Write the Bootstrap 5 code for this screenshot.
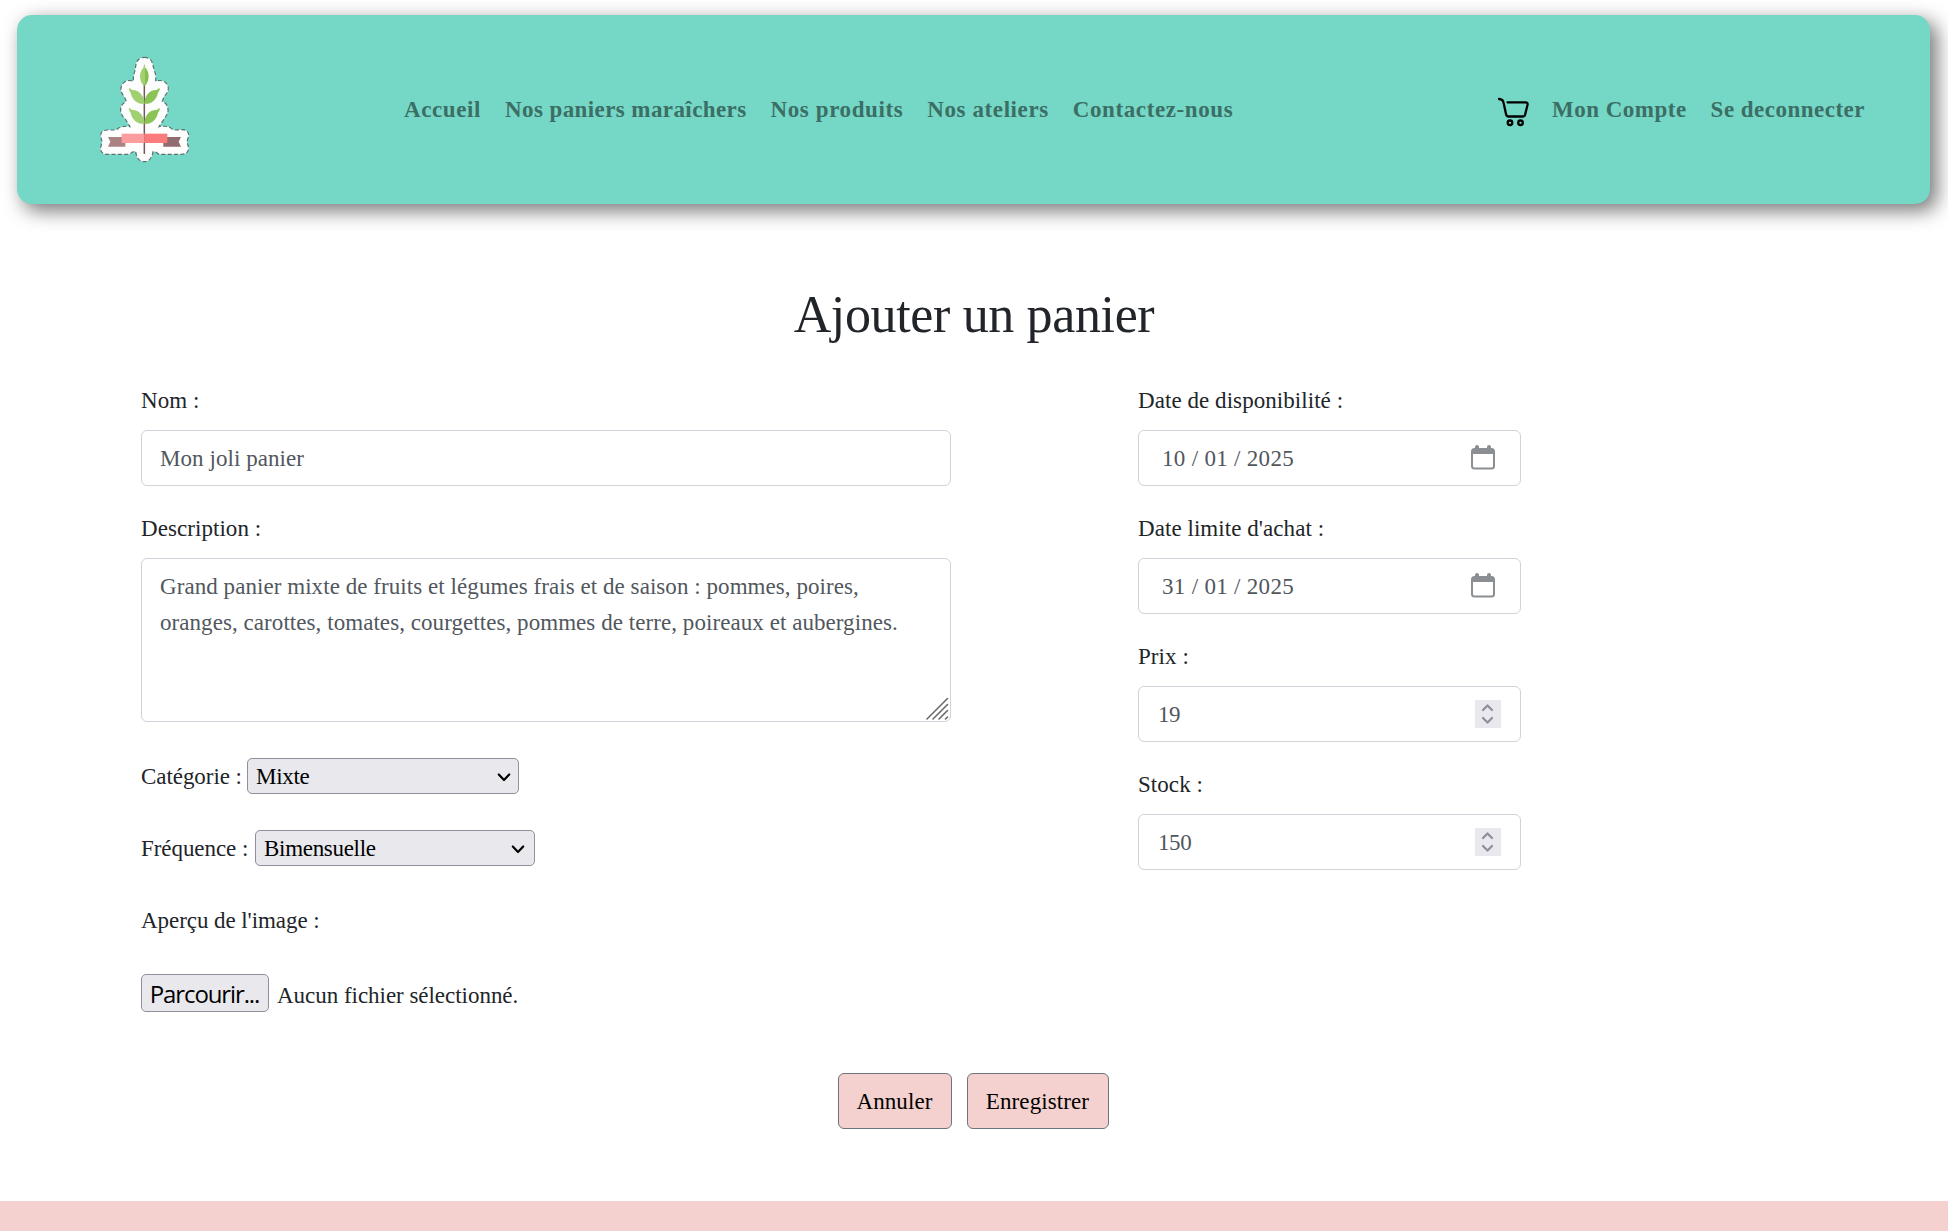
<!DOCTYPE html>
<html lang="fr">
<head>
<meta charset="utf-8">
<meta name="viewport" content="width=device-width, initial-scale=1">
<title>Ajouter un panier</title>
<link href="https://cdn.jsdelivr.net/npm/bootstrap@5.3.0/dist/css/bootstrap.min.css" rel="stylesheet">
<style>
body{font-family:"Liberation Serif",serif;font-size:23px;line-height:36px;letter-spacing:.06px;color:#212529;background:#fff;overflow:hidden}
.site-nav{margin:15px 18px 0 17px;height:189px;padding:0 53px 0 73px;border-radius:15px;background:#75d7c5;box-shadow:6.25px 6.25px 18.75px rgba(0,0,0,.53)}
.site-nav .nav-link{padding:0 12px;font-weight:700;letter-spacing:.49px;color:#3b6f65;white-space:nowrap}
.site-nav .nav-main .nav-link{letter-spacing:.6px}
.site-nav .nav-main .nav-long{letter-spacing:.41px}
.nav-main{margin-left:192px}
.page-title{margin:80px 0 0;font-size:52px;line-height:62px;letter-spacing:-.36px;font-weight:400}
.panier-form{padding:37px 0 0 141px}
.col-left{width:810px}
.col-right{width:383px;margin-left:187px}
.form-label{display:block;margin:0 0 11px}
.form-control{font:inherit;letter-spacing:inherit;color:#51575d;border:1px solid #ced4da;border-radius:6px;padding:10px 18px 8px;height:56px;background:#fff}
.field{height:128px}
.field-area{height:247px}
textarea.form-control{height:164px;resize:none;overflow:hidden;white-space:pre;letter-spacing:.06px}
.date-input{padding-left:23px;letter-spacing:.3px}
.num-input{letter-spacing:-.4px;padding-left:19px}
.over-icon{position:absolute;pointer-events:none}
.cal-icon{right:26px;top:15px}
.spin-icon{right:20px;top:14px}
.grip-icon{right:2px;bottom:2px}
.pick-row{height:36px;margin-bottom:36px}
.pick-text{padding-top:1px;letter-spacing:-.06px}
.pick{appearance:none;display:block;height:36px;font:inherit;letter-spacing:-.3px;line-height:32px;color:#000;background:#e9e9ed;border:1px solid #8f8f9d;border-radius:5px;padding:2px 8px 0}
.pick-cat{width:272px}
.pick-freq{width:280px}
.chev{right:8px;top:13px}
.pick-freq + .chev{right:10px}
.file-btn{width:128px;height:38px;font-family:"Open Sans",sans-serif;font-size:24px;line-height:34px;letter-spacing:-1.12px;color:#000;background:#e9e9ed;border:1px solid #8f8f9d;border-radius:5px;padding:1px 1px 0 0;white-space:nowrap}
.file-name{padding-top:4px;letter-spacing:-.03px}
.form-actions{gap:15px;margin-top:59px;padding-right:2px}
.btn-pink{font-size:23px;line-height:36px;letter-spacing:.1px;color:#000;background:#f4d0ce;border:1px solid #6c757d;border-radius:6px;height:56px;padding:10px 0 8px}
.site-footer{margin-top:72px;height:60px;background:#f4d0ce}
</style>
</head>
<body>
<nav class="site-nav d-flex align-items-center">
  <svg width="110" height="120" viewBox="0 0 330 360" aria-label="Logo">
    <path d="M163 22C177 22 186 30 188 43L193 62C199 76 197 86 197 94C213 88 228 93 234 109C238 122 230 131 222 140L217 154C229 159 235 170 234 184C231 197 224 203 219 212L207 230C220 228 232 228 241 233Q248 240 256 240L278 239C291 240 297 247 296 258L291 275L296 294C295 307 287 313 274 313H207Q193 302 189 305L187 315C182 328 175 335 163 335S143 328 139 315L137 305Q132 301 119 313H54C38 313 31 306 32 293L36 275L32 258C32 246 39 240 52 240H72Q80 240 86 234C96 228 108 228 120 230L106 207C98 199 93 193 92 181C91 169 98 159 109 154L103 140C95 131 90 122 94 109C100 93 115 88 130 94C129 81 132 72 135 61L138 43C141 30 150 22 163 22Z" fill="#fdfdfd" stroke="#5b706c" stroke-width="3.600" stroke-dasharray="12 7"/>
    <path d="M163 102V312" stroke="#74595a" stroke-width="4.500"/>
    <path d="M163 43Q160 45 161 52Q149 66 150 80Q151 98 163 109Z" fill="#a3d172"/>
    <path d="M163 43Q166 45 165 52Q177 66 176 80Q175 98 163 109Z" fill="#86be50"/>
    <g id="leaf-pair">
      <path d="M163 161C143 164 126 149 122 128Q115 119 117 115Q121 114 126 120C147 119 163 138 163 161Z" fill="#a1d071"/>
      <path d="M163 161C183 164 200 149 204 128Q211 119 209 115Q205 114 200 120C179 119 163 138 163 161Z" fill="#8bc355"/>
    </g>
    <use href="#leaf-pair" y="60"/>
    <path d="M54 261H106V290H54L61 275Z" fill="#ab8284"/>
    <path d="M273 261H220V290H273L266 275Z" fill="#916b6d"/>
    <path d="M95 251H163V279H95Z" fill="#fe9d9d"/>
    <path d="M163 251H232V279H163Z" fill="#fb7b7c"/>
  </svg>
  <div class="nav-main d-flex">
    <a class="nav-link" href="#">Accueil</a>
    <a class="nav-link nav-long" href="#">Nos paniers maraîchers</a>
    <a class="nav-link" href="#">Nos produits</a>
    <a class="nav-link" href="#">Nos ateliers</a>
    <a class="nav-link" href="#">Contactez-nous</a>
  </div>
  <div class="d-flex align-items-center ms-auto">
    <svg class="me-2 mt-1" width="36" height="32" viewBox="0 0 36 32" fill="none" stroke="#000" stroke-width="2.300" stroke-linecap="round" stroke-linejoin="round" aria-label="Panier">
      <path d="M3 3Q7 3.300 7.500 6.500L10 18Q10.500 20.500 12.500 20.500H27Q28.500 20.500 29 19L31.500 9Q32 6.300 29.500 6.300H11.500"/>
      <circle cx="14" cy="26.800" r="2.300"/><circle cx="24.500" cy="26.800" r="2.300"/>
    </svg>
    <a class="nav-link" href="#">Mon Compte</a>
    <a class="nav-link" href="#">Se deconnecter</a>
  </div>
</nav>

<main>
  <h1 class="page-title text-center">Ajouter un panier</h1>
  <form>
    <div class="panier-form d-flex">
      <div class="col-left">
        <div class="field">
          <label class="form-label" for="nom">Nom :</label>
          <input class="form-control" id="nom" type="text" value="Mon joli panier">
        </div>
        <div class="field-area">
          <label class="form-label" for="desc">Description :</label>
          <div class="position-relative">
            <textarea class="form-control" id="desc">Grand panier mixte de fruits et légumes frais et de saison : pommes, poires,
oranges, carottes, tomates, courgettes, pommes de terre, poireaux et aubergines.</textarea>
            <svg class="over-icon grip-icon" width="23" height="23" viewBox="0 0 23 23" stroke="#6b6b6b" stroke-width="1.600" stroke-linecap="round"><path d="M1 22L21.500 1.500M7 22L21.500 7.500M13 22L21.500 13.500M19.500 22L21.500 20"/></svg>
          </div>
        </div>
        <div class="pick-row d-flex">
          <label class="pick-text" for="cat" style="width:106px">Catégorie :</label>
          <div class="position-relative">
            <select class="pick pick-cat" id="cat"><option>Mixte</option></select>
            <svg class="over-icon chev" width="14" height="12" viewBox="0 0 14 12" fill="none" stroke="#000" stroke-width="2.200" stroke-linecap="round" stroke-linejoin="round"><path d="M1.800 3.500L7 9L12.200 3.500"/></svg>
          </div>
        </div>
        <div class="pick-row d-flex">
          <label class="pick-text" for="freq" style="width:114px">Fréquence :</label>
          <div class="position-relative">
            <select class="pick pick-freq" id="freq"><option>Bimensuelle</option></select>
            <svg class="over-icon chev" width="14" height="12" viewBox="0 0 14 12" fill="none" stroke="#000" stroke-width="2.200" stroke-linecap="round" stroke-linejoin="round"><path d="M1.800 3.500L7 9L12.200 3.500"/></svg>
          </div>
        </div>
        <div class="pick-row pick-text">Aperçu de l'image :</div>
        <div class="d-flex">
          <button type="button" class="file-btn">Parcourir...</button>
          <span class="file-name ms-2">Aucun fichier sélectionné.</span>
        </div>
      </div>
      <div class="col-right">
        <div class="field">
          <label class="form-label" for="dispo">Date de disponibilité :</label>
          <div class="position-relative">
            <input class="form-control date-input" id="dispo" type="text" value="10 / 01 / 2025">
            <svg class="over-icon cal-icon" width="24" height="25" viewBox="0 0 24 25"><path fill="#8b8e92" fill-rule="evenodd" d="M4 3V2a2 2 0 0 1 4 0V3H16V2a2 2 0 0 1 4 0V3H20.500Q24 3 24 6.500V21Q24 24.500 20.500 24.500H3.500Q0 24.500 0 21V6.500Q0 3 3.500 3ZM2 9V21Q2 22.500 3.500 22.500H20.500Q22 22.500 22 21V9Z"/></svg>
          </div>
        </div>
        <div class="field">
          <label class="form-label" for="limite">Date limite d'achat :</label>
          <div class="position-relative">
            <input class="form-control date-input" id="limite" type="text" value="31 / 01 / 2025">
            <svg class="over-icon cal-icon" width="24" height="25" viewBox="0 0 24 25"><path fill="#8b8e92" fill-rule="evenodd" d="M4 3V2a2 2 0 0 1 4 0V3H16V2a2 2 0 0 1 4 0V3H20.500Q24 3 24 6.500V21Q24 24.500 20.500 24.500H3.500Q0 24.500 0 21V6.500Q0 3 3.500 3ZM2 9V21Q2 22.500 3.500 22.500H20.500Q22 22.500 22 21V9Z"/></svg>
          </div>
        </div>
        <div class="field">
          <label class="form-label" for="prix">Prix :</label>
          <div class="position-relative">
            <input class="form-control num-input" id="prix" type="text" value="19">
            <svg class="over-icon spin-icon" width="26" height="28" viewBox="0 0 26 28"><path fill="#e9e9ed" d="M0 0H26V28H0Z"/><path fill="none" stroke="#8f8f9d" stroke-width="2.300" stroke-linecap="round" stroke-linejoin="round" d="M8 10L12.500 5.500L17 10M8 18L12.500 22.500L17 18"/></svg>
          </div>
        </div>
        <div class="field">
          <label class="form-label" for="stock">Stock :</label>
          <div class="position-relative">
            <input class="form-control num-input" id="stock" type="text" value="150">
            <svg class="over-icon spin-icon" width="26" height="28" viewBox="0 0 26 28"><path fill="#e9e9ed" d="M0 0H26V28H0Z"/><path fill="none" stroke="#8f8f9d" stroke-width="2.300" stroke-linecap="round" stroke-linejoin="round" d="M8 10L12.500 5.500L17 10M8 18L12.500 22.500L17 18"/></svg>
          </div>
        </div>
      </div>
    </div>
    <div class="form-actions d-flex justify-content-center">
      <button type="button" class="btn btn-pink" style="width:114px">Annuler</button>
      <button type="button" class="btn btn-pink" style="width:142px">Enregistrer</button>
    </div>
  </form>
</main>
<footer class="site-footer"></footer>
<script src="https://cdn.jsdelivr.net/npm/bootstrap@5.3.0/dist/js/bootstrap.bundle.min.js"></script>
</body>
</html>
